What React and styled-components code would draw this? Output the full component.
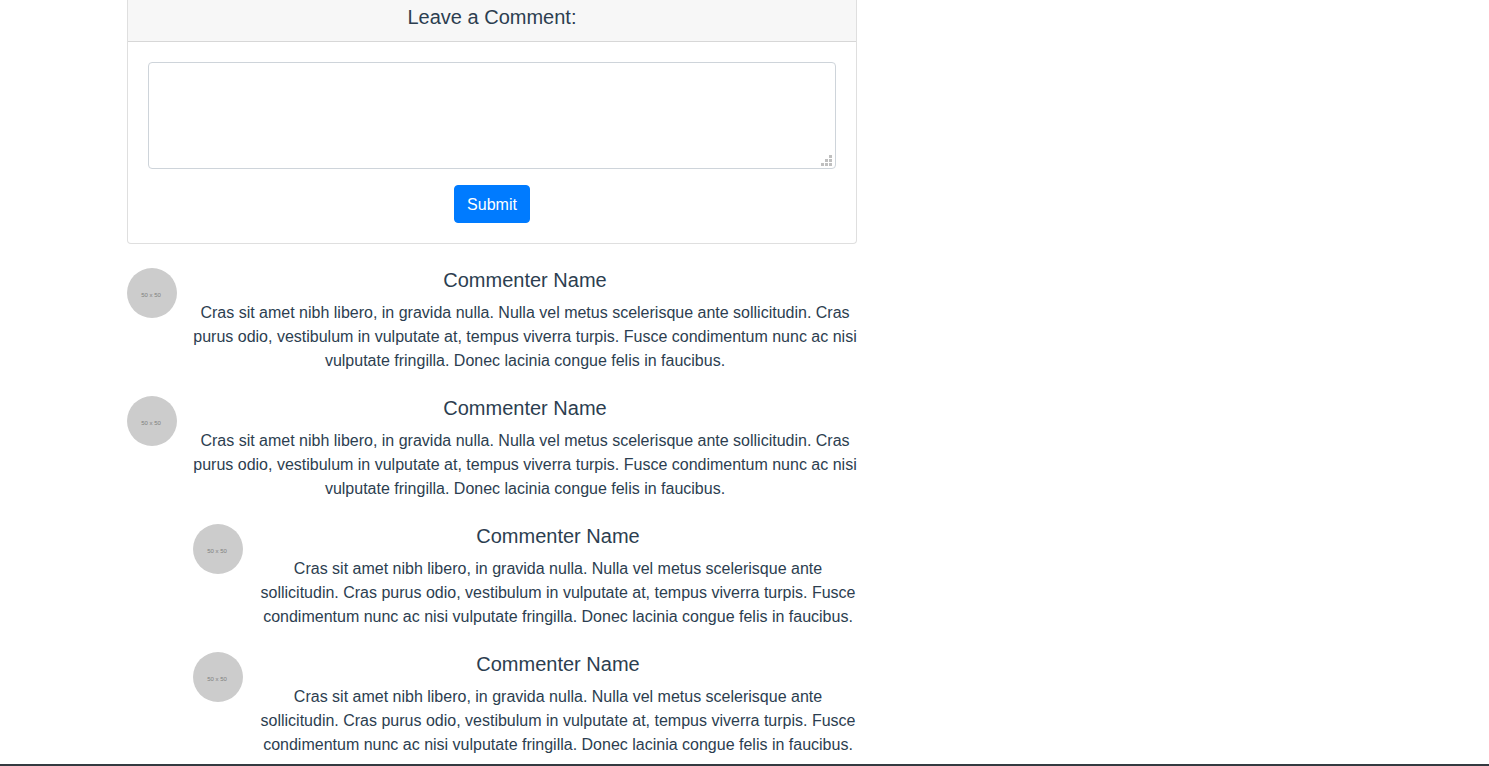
import React from "react";
import styled, { createGlobalStyle } from "styled-components";

const GlobalStyle = createGlobalStyle`
  *, *::before, *::after { box-sizing: border-box; }
  body {
    margin: 0;
    background: #fff;
    color: #2c3e50;
    font-family: "Liberation Sans", Arial, sans-serif;
    font-size: 16px;
    line-height: 24px;
    text-align: center;
  }
`;

const Content = styled.main`
  max-width: 857px;
  padding-left: 127px;
  padding-bottom: 7px;
`;

const Card = styled.section`
  margin-bottom: 24px;
  border: 1px solid #dfdfdf;
  border-top: 0;
  border-radius: 0 0 4px 4px;
`;

const CardHeader = styled.h5`
  margin: 0;
  padding: 5px 20px 12px;
  border-bottom: 1px solid #d7d7d7;
  background: #f7f7f7;
  font-size: 20px;
  font-weight: 400;
`;

const CardBody = styled.form`
  padding: 20px;
`;

const Field = styled.div`
  position: relative;
  display: flex;
  margin-bottom: 16px;
`;

const TextArea = styled.textarea`
  width: 100%;
  height: 107px;
  padding: 6px 12px;
  border: 1px solid #ced4da;
  border-radius: 4px;
  background: #fff;
  color: #495057;
  font: inherit;
  resize: none;
`;

const Grip = styled.svg`
  position: absolute;
  right: 4px;
  bottom: 3px;
  pointer-events: none;
`;

const SubmitButton = styled.button`
  display: block;
  margin: 0 auto;
  padding: 7px 12px 5px;
  border: 1px solid #007bff;
  border-radius: 4px;
  background: #007bff;
  color: #fff;
  font: inherit;
  cursor: pointer;
`;

const Media = styled.article`
  display: flex;
  align-items: flex-start;
  gap: 16px;

  & + &, & & {
    margin-top: 23px;
  }
`;

const MediaBody = styled.div`
  flex: 1;
  min-width: 0;
`;

const Name = styled.h5`
  margin: 0 0 9px;
  font-size: 20px;
  font-weight: 400;
  line-height: 24px;
`;

const Avatar = styled.svg`
  flex: none;
  border-radius: 50%;
  background: #ccc;
`;

const Footer = styled.footer`
  height: 2px;
  background: #343a40;
`;

const message =
  "Cras sit amet nibh libero, in gravida nulla. Nulla vel metus scelerisque ante sollicitudin. Cras purus odio, vestibulum in vulputate at, tempus viverra turpis. Fusce condimentum nunc ac nisi vulputate fringilla. Donec lacinia congue felis in faucibus.";

function Comment({ children }) {
  return (
    <Media>
      <Avatar width="50" height="50" viewBox="0 0 50 50" role="img" aria-label="Commenter">
        <text x="24" y="29" textAnchor="middle" fontFamily="Liberation Sans, sans-serif" fontSize="6" fill="#808080">
          50 x 50
        </text>
      </Avatar>
      <MediaBody>
        <Name>Commenter Name</Name>
        {message}
        {children}
      </MediaBody>
    </Media>
  );
}

const gripDots = [[8, 0], [4, 4], [8, 4], [0, 8], [4, 8], [8, 8]];

export default function App() {
  return (
    <>
      <GlobalStyle />
      <Content>
        <Card>
          <CardHeader id="comment-title">Leave a Comment:</CardHeader>
          <CardBody onSubmit={(e) => e.preventDefault()}>
            <Field>
              <TextArea rows={3} aria-labelledby="comment-title" />
              <Grip width="11" height="11" aria-hidden="true">
                {gripDots.map(([x, y]) => (
                  <rect key={`${x}-${y}`} x={x} y={y} width="3" height="3" fill="#bfbfbf" />
                ))}
              </Grip>
            </Field>
            <SubmitButton type="submit">Submit</SubmitButton>
          </CardBody>
        </Card>
        <Comment />
        <Comment>
          <Comment />
          <Comment />
        </Comment>
      </Content>
      <Footer />
    </>
  );
}
